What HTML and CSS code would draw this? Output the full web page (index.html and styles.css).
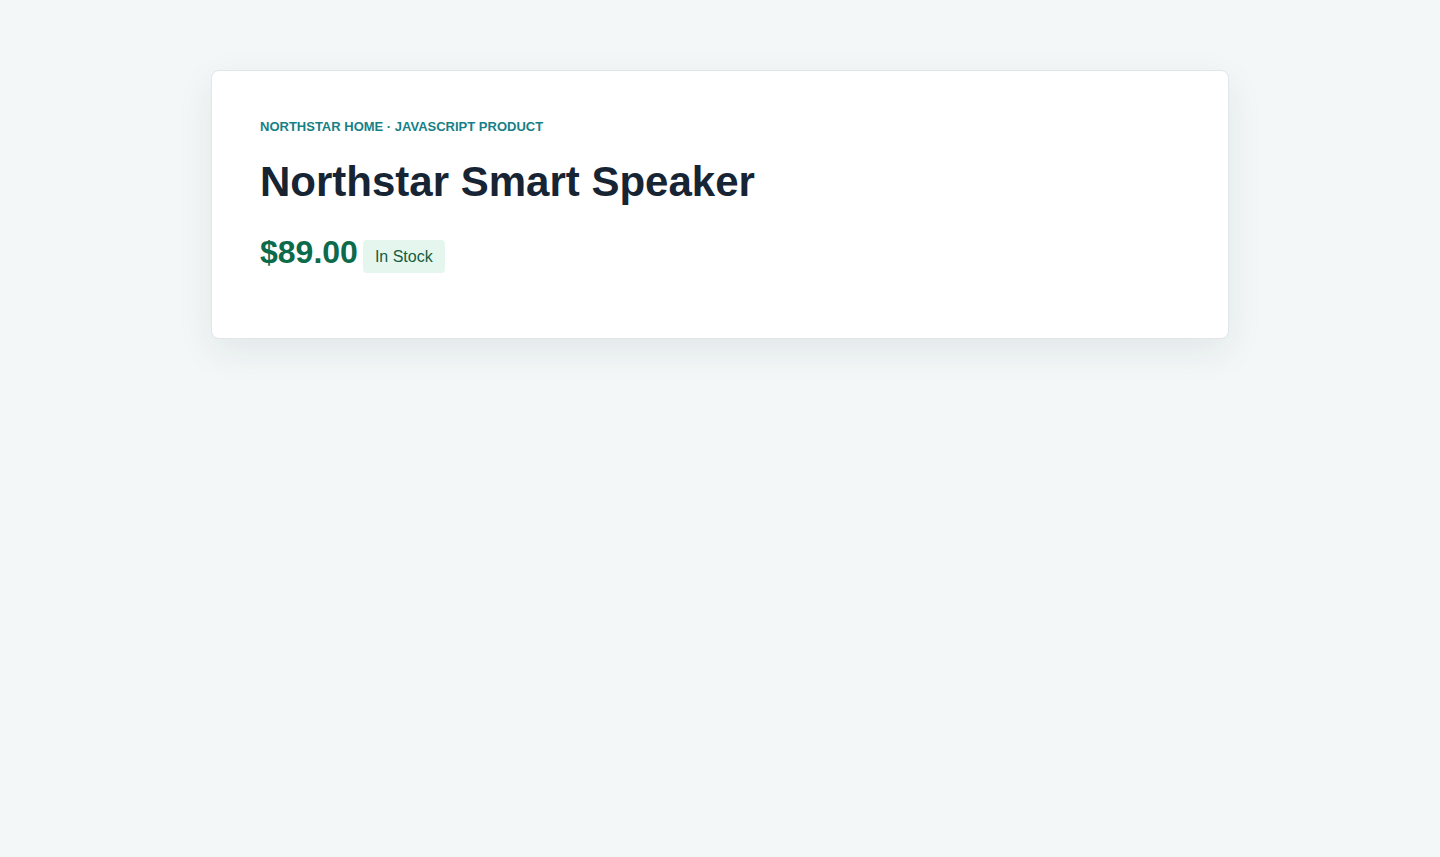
FILE: index.html
```html
<!DOCTYPE html>
<html lang="en">
<head>
<meta charset="utf-8">
<title>Northstar Smart Speaker</title>
<link rel="stylesheet" href="styles.css">
</head>
<body>
<main class="card">
  <p class="eyebrow">Northstar Home · JavaScript Product</p>
  <h1 class="title">Northstar Smart Speaker</h1>
  <div class="price-row">
    <span class="price">$89.00</span>
    <span class="badge">In Stock</span>
  </div>
</main>
</body>
</html>
```

FILE: styles.css
```css
html, body {
  margin: 0;
  padding: 0;
}
body {
  box-sizing: border-box;
  min-height: 100vh;
  background: #f3f7f8;
  font-family: "Liberation Sans", Arial, sans-serif;
  color: #172433;
  padding-top: 70px;
}
.card {
  box-sizing: border-box;
  width: 1018px;
  margin: 0 auto;
  background: #ffffff;
  border: 1px solid #e2e6e9;
  border-radius: 8px;
  box-shadow: 0 12px 36px rgba(20, 40, 50, 0.08);
  padding: 48px 48px 65px;
}
.eyebrow {
  margin: 0;
  font-size: 13px;
  line-height: 16px;
  font-weight: 700;
  text-transform: uppercase;
  color: #177f86;
}
.title {
  margin: 21px 0 0;
  font-size: 42px;
  line-height: 52px;
  font-weight: 700;
  color: #172433;
}
.price-row {
  display: flex;
  align-items: center;
  gap: 5px;
  margin-top: 22px;
}
.price {
  font-size: 32px;
  line-height: 40px;
  font-weight: 700;
  color: #0c6b4b;
}
.badge {
  background: #e5f6ee;
  color: #135e3f;
  font-size: 16px;
  line-height: 25px;
  padding: 4px 12px;
  border-radius: 4px;
  margin-top: 10px;
}
```
